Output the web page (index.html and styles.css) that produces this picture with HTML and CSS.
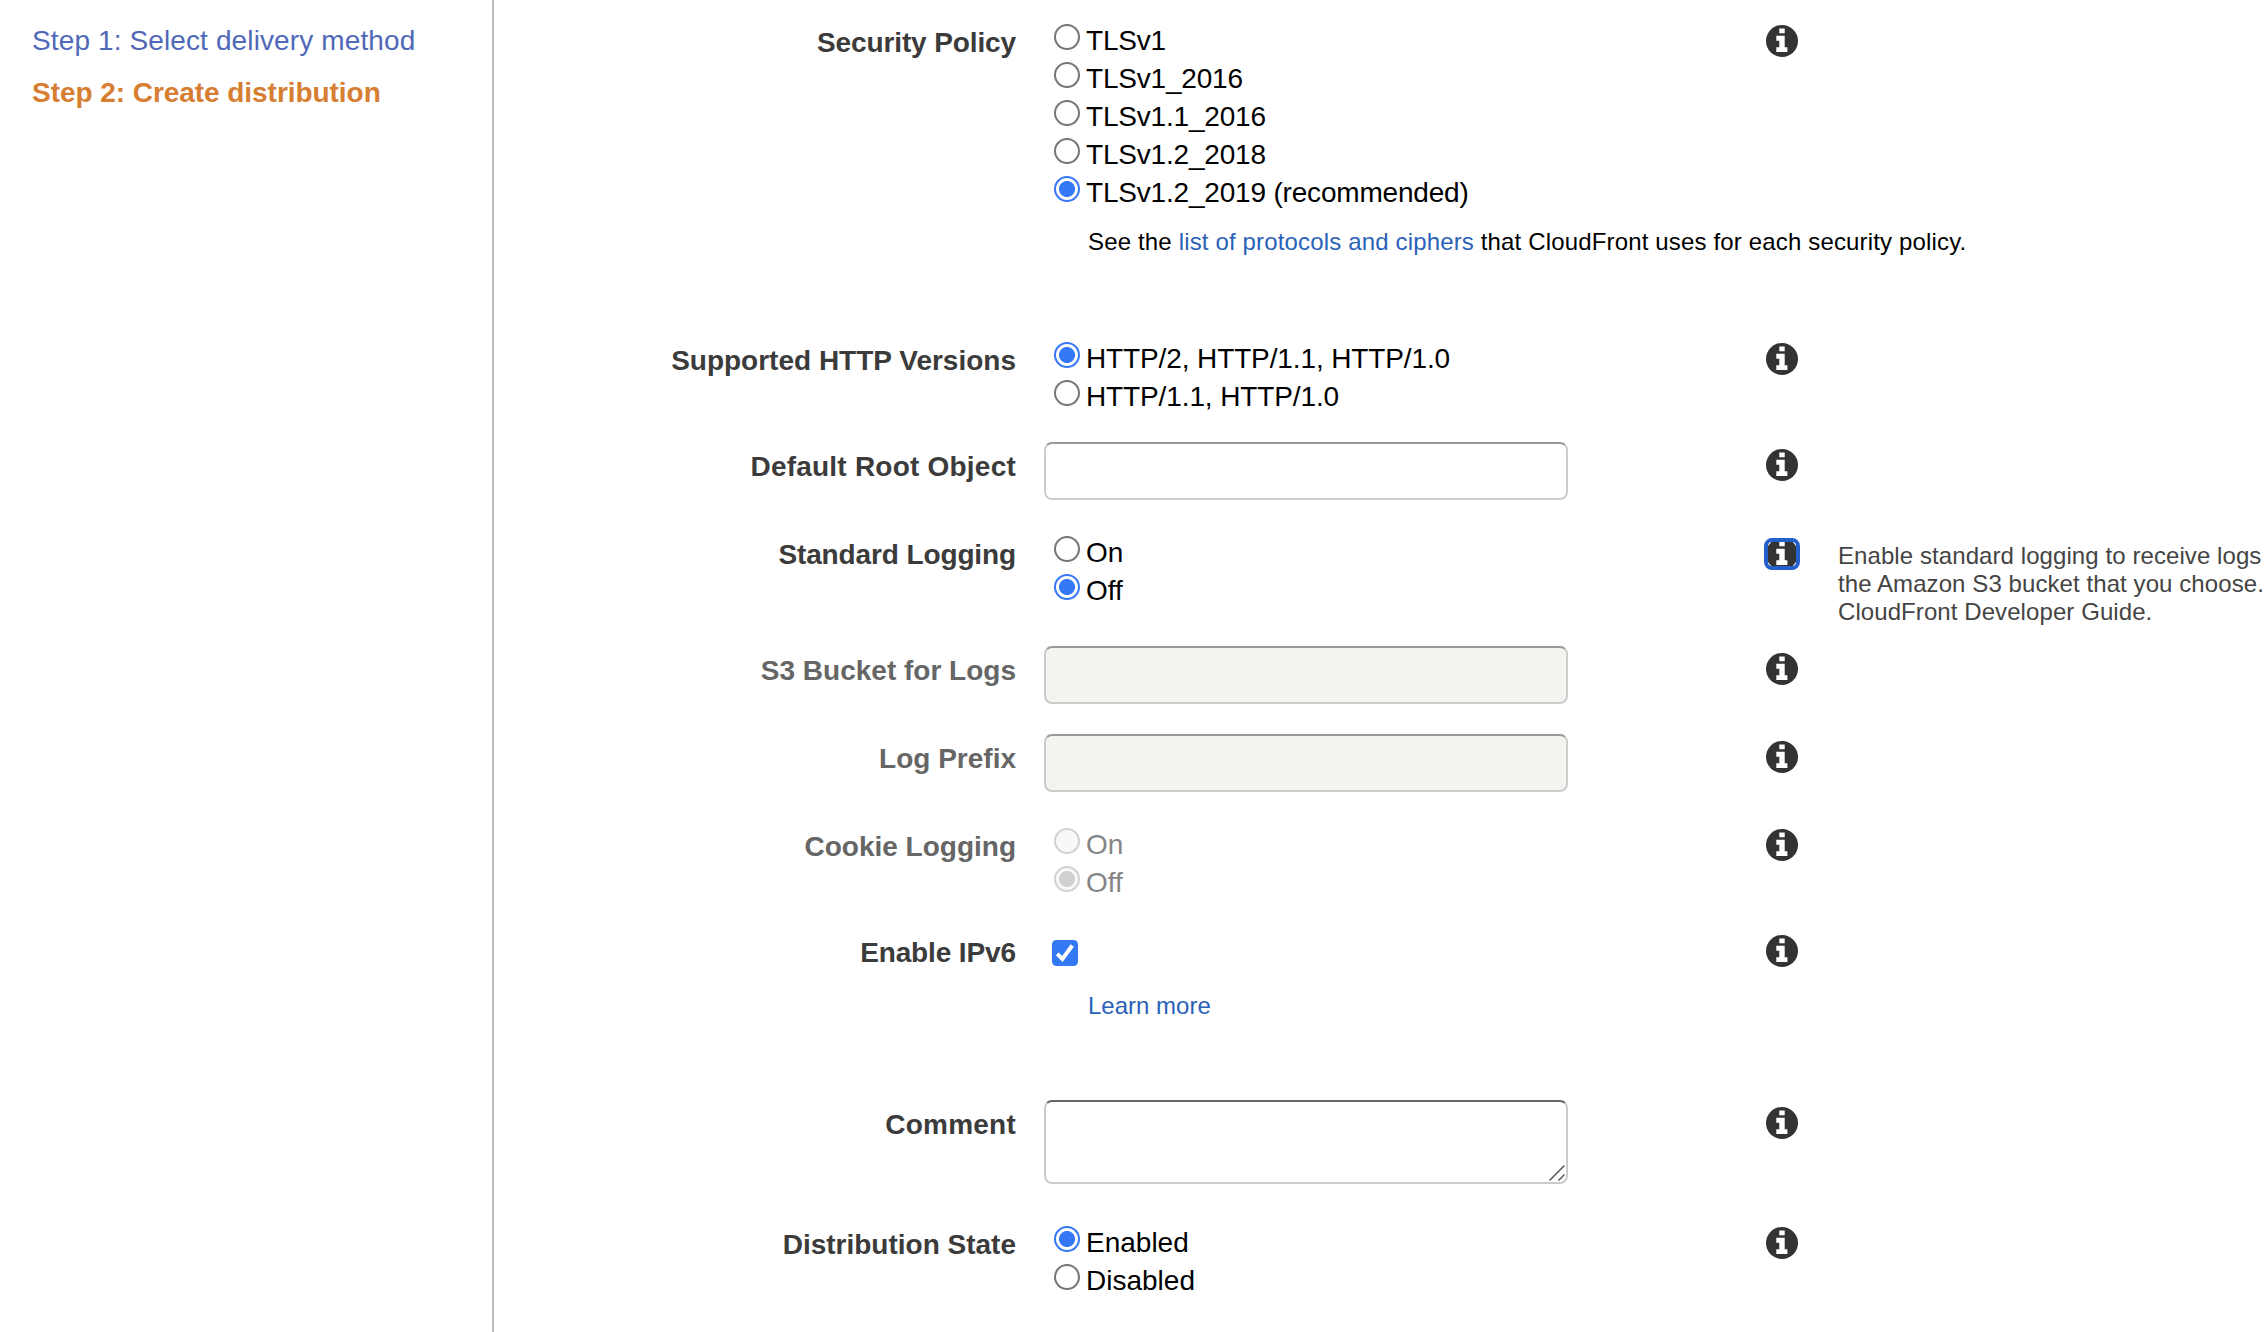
FILE: index.html
```html
<!DOCTYPE html>
<html lang="en">
<head>
<meta charset="utf-8">
<title>Create distribution</title>
<link rel="stylesheet" href="styles.css">
</head>
<body>
<svg class="sprite" aria-hidden="true">
  <symbol id="info" viewBox="0 0 32 32">
    <circle cx="16" cy="16" r="16" fill="#333"/>
    <path d="M13.3 3.5h5.4v4.7h-5.4zM10.3 10.8h8.4v11.5h2.7v4.8H10.3v-4.8h3V15.700h-3z" fill="#fff"/>
  </symbol>
</svg>
<div class="page">
  <nav class="steps">
    <a class="step" href="#">Step 1: Select delivery method</a>
    <a class="step step-current" href="#">Step 2: Create distribution</a>
  </nav>
  <form class="form">
    <div class="row">
      <div class="label snug">Security Policy</div>
      <div class="field">
        <label class="option tight"><input type="radio" name="policy">TLSv1</label>
        <label class="option tight"><input type="radio" name="policy">TLSv1_2016</label>
        <label class="option tight"><input type="radio" name="policy">TLSv1.1_2016</label>
        <label class="option tight"><input type="radio" name="policy">TLSv1.2_2018</label>
        <label class="option tight"><input type="radio" name="policy" checked>TLSv1.2_2019 (recommended)</label>
        <p class="note note-policy">See the <a href="#">list of protocols and ciphers</a> that CloudFront uses for each security policy.</p>
      </div>
      <svg class="info"><use href="#info"/></svg>
    </div>
    <div class="row">
      <div class="label">Supported HTTP Versions</div>
      <div class="field">
        <label class="option snug"><input type="radio" name="http" checked>HTTP/2, HTTP/1.1, HTTP/1.0</label>
        <label class="option snug"><input type="radio" name="http">HTTP/1.1, HTTP/1.0</label>
      </div>
      <svg class="info"><use href="#info"/></svg>
    </div>
    <div class="row">
      <div class="label loose">Default Root Object</div>
      <div class="field"><input class="text" type="text"></div>
      <svg class="info"><use href="#info"/></svg>
    </div>
    <div class="row">
      <div class="label snug">Standard Logging</div>
      <div class="field">
        <label class="option"><input type="radio" name="logging">On</label>
        <label class="option"><input type="radio" name="logging" checked>Off</label>
      </div>
      <div class="info-focus"><svg class="info-clipped" viewBox="2 4 28 24"><use href="#info" width="32" height="32"/></svg></div>
      <p class="help">Enable standard logging to receive logs<br>the Amazon S3 bucket that you choose.<br>CloudFront Developer Guide.</p>
    </div>
    <div class="row row-disabled">
      <div class="label">S3 Bucket for Logs</div>
      <div class="field"><input class="text" type="text" disabled></div>
      <svg class="info"><use href="#info"/></svg>
    </div>
    <div class="row row-disabled">
      <div class="label">Log Prefix</div>
      <div class="field"><input class="text" type="text" disabled></div>
      <svg class="info"><use href="#info"/></svg>
    </div>
    <div class="row row-disabled">
      <div class="label">Cookie Logging</div>
      <div class="field">
        <label class="option"><input type="radio" name="cookies" disabled>On</label>
        <label class="option"><input type="radio" name="cookies" disabled checked>Off</label>
      </div>
      <svg class="info"><use href="#info"/></svg>
    </div>
    <div class="row">
      <div class="label snug">Enable IPv6</div>
      <div class="field">
        <svg class="check" viewBox="0 0 26 26"><rect width="26" height="26" rx="4.500" fill="#3478f6"/><path d="M5.200 13.800l5.200 5.200L20.300 5.500" fill="none" stroke="#fff" stroke-width="3.900"/></svg>
        <p class="note note-ipv6"><a href="#">Learn more</a></p>
      </div>
      <svg class="info"><use href="#info"/></svg>
    </div>
    <div class="row">
      <div class="label loose">Comment</div>
      <div class="field comment">
        <textarea class="text text-area"></textarea>
        <svg class="grip" viewBox="0 0 16 16"><path d="M.5 15.500l15-15M9.500 15.500l6-6" stroke="#555" stroke-width="1.500"/></svg>
      </div>
      <svg class="info"><use href="#info"/></svg>
    </div>
    <div class="row">
      <div class="label">Distribution State</div>
      <div class="field">
        <label class="option"><input type="radio" name="state" checked>Enabled</label>
        <label class="option"><input type="radio" name="state">Disabled</label>
      </div>
      <svg class="info"><use href="#info"/></svg>
    </div>
  </form>
</div>
</body>
</html>
```
FILE: styles.css
```css
* { box-sizing: border-box; }
body {
  margin: 0;
  background: #fff;
  color: #000;
  font: 28px/38px "Liberation Sans", Arial, sans-serif;
  overflow: hidden;
}
a { color: #2a62b8; text-decoration: none; }
.sprite { display: none; }
.page { display: flex; width: 2264px; height: 1332px; overflow: hidden; }

.steps {
  flex: none;
  width: 494px;
  padding: 22px 0 0 32px;
  border-right: 2px solid #bbb;
}
.step { display: block; margin-bottom: 14px; color: #5068b8; white-space: nowrap; letter-spacing: .12px; }
.step-current { color: #d67e31; font-weight: bold; letter-spacing: -.05px; }

.form {
  flex: none;
  display: grid;
  grid-template-rows: 318px 106px 88px 116px 88px 88px 106px 172px 120px 112px;
  padding-top: 18px;
}
.row {
  display: grid;
  grid-template-columns: 522px 524px 170px 1fr;
  column-gap: 28px;
  width: 1770px;
  align-items: start;
}
.label { padding-top: 6px; text-align: right; font-weight: bold; color: #3b3b3b; }
.field { white-space: nowrap; }
.row-disabled .label { color: #666; }
.row-disabled .option { color: #858585; }
.snug { letter-spacing: -.12px; }
.tight { letter-spacing: -.19px; }
.loose { letter-spacing: .22px; }

.option { display: flex; align-items: flex-start; gap: 6px; height: 38px; padding-left: 10px; }
.option { position: relative; top: 4px; }
input[type="radio"] {
  appearance: none;
  flex: none;
  width: 26px;
  height: 26px;
  margin: 2px 0 0;
  border: 2px solid #767676;
  border-radius: 50%;
  background: #fff;
}
input[type="radio"]:checked {
  border-color: #3478f6;
  background: radial-gradient(circle, #3478f6 7.600px, #fff 8.400px);
}
input[type="radio"]:disabled { border-color: #d1d1d1; background: #f8f8f8; }
input[type="radio"]:disabled:checked { background: radial-gradient(circle, #d0d0d0 7.600px, #f8f8f8 8.400px); }

.note { margin: 0; padding-left: 44px; font-size: 24px; line-height: 28px; letter-spacing: .155px; }
.note-policy { margin-top: 20px; }
.note-ipv6 { margin-top: 26px; letter-spacing: 0; }

.text {
  display: block;
  width: 524px;
  height: 58px;
  border: 2px solid #ccc;
  border-top-color: #999;
  border-radius: 8px;
  background: #fff;
}
.text:disabled { background: #f4f3ef; }
.text-area { height: 84px; border-top-color: #666; resize: none; }
.comment { position: relative; }
.grip { position: absolute; right: 3px; bottom: 3px; width: 16px; height: 16px; }

.check { display: block; width: 26px; height: 26px; margin: 12px 0 0 8px; }
.info { width: 32px; height: 32px; margin: 6.700px 0 0 170px; }
.info-focus {
  width: 36px;
  height: 32px;
  margin: 8px 0 0 168px;
  border: 4px solid #2360cc;
  border-radius: 8px;
  background: #fff;
}
.info-clipped { display: block; width: 28px; height: 24px; }
.help { width: 480px; margin: 12px 0 0 44px; font-size: 24px; line-height: 28px; letter-spacing: .08px; color: #444; white-space: nowrap; }
```
